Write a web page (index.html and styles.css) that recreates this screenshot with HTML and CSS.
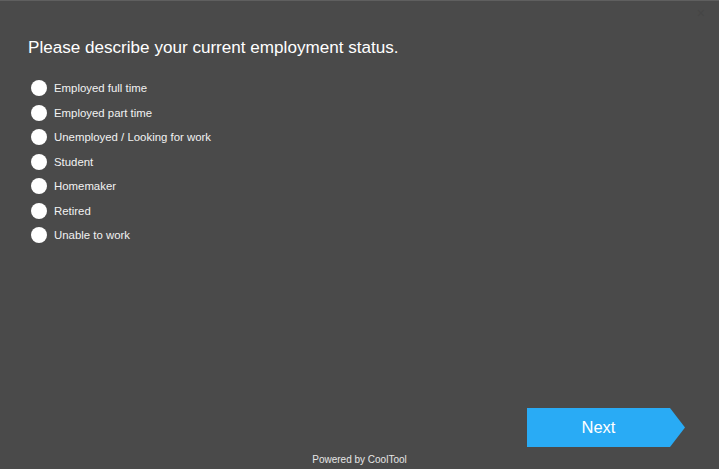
FILE: index.html
```html
<!DOCTYPE html>
<html>
<head>
<meta charset="utf-8">
<link rel="stylesheet" href="styles.css">
</head>
<body>
<div class="survey">
  <span class="close">×</span>
  <h1 class="question">Please describe your current employment status.</h1>
  <ul class="options">
    <li class="option"><span class="radio"></span><span class="label">Employed full time</span></li>
    <li class="option"><span class="radio"></span><span class="label">Employed part time</span></li>
    <li class="option"><span class="radio"></span><span class="label">Unemployed / Looking for work</span></li>
    <li class="option"><span class="radio"></span><span class="label">Student</span></li>
    <li class="option"><span class="radio"></span><span class="label">Homemaker</span></li>
    <li class="option"><span class="radio"></span><span class="label">Retired</span></li>
    <li class="option"><span class="radio"></span><span class="label">Unable to work</span></li>
  </ul>
  <div class="footer">
    <button class="next">Next</button>
    <div class="powered">Powered by CoolTool</div>
  </div>
</div>
</body>
</html>
```
FILE: styles.css
```css
html, body {
  margin: 0;
  padding: 0;
  background: #4a4a4a;
}
body {
  font-family: "Liberation Sans", Arial, sans-serif;
  color: #ffffff;
}
.survey {
  position: relative;
  box-sizing: border-box;
  height: 469px;
  border-top: 1px solid #5f5f5f;
  display: flex;
  flex-direction: column;
  padding: 0 0 0 28px;
}
.close {
  position: absolute;
  top: 4px;
  right: 14px;
  font-size: 14px;
  color: #454545;
}
.question {
  margin: 36px 0 0 0;
  font-size: 17.1px;
  font-weight: normal;
  line-height: 22px;
}
.options {
  list-style: none;
  margin: 21px 0 0 0;
  padding: 0;
  display: flex;
  flex-direction: column;
  gap: 8.5px;
}
.option {
  display: flex;
  align-items: center;
  height: 16px;
}
.radio {
  width: 16px;
  height: 16px;
  border-radius: 50%;
  background: #ffffff;
  margin-left: 3px;
  margin-right: 7px;
}
.label {
  font-size: 11.4px;
  color: #f2f2f2;
}
.footer {
  margin-top: auto;
  display: flex;
  flex-direction: column;
  align-items: center;
  margin-left: -28px;
}
.next {
  align-self: flex-end;
  margin-right: 34px;
  width: 158px;
  height: 39px;
  border: none;
  background: #29abf5;
  color: #ffffff;
  font-family: "Liberation Sans", Arial, sans-serif;
  font-size: 16.5px;
  padding: 0 15px 0 0;
  clip-path: polygon(0 0, 143px 0, 158px 50%, 143px 100%, 0 100%);
}
.powered {
  margin-top: 7px;
  height: 15px;
  font-size: 10px;
  color: #e6e6e6;
}
```
